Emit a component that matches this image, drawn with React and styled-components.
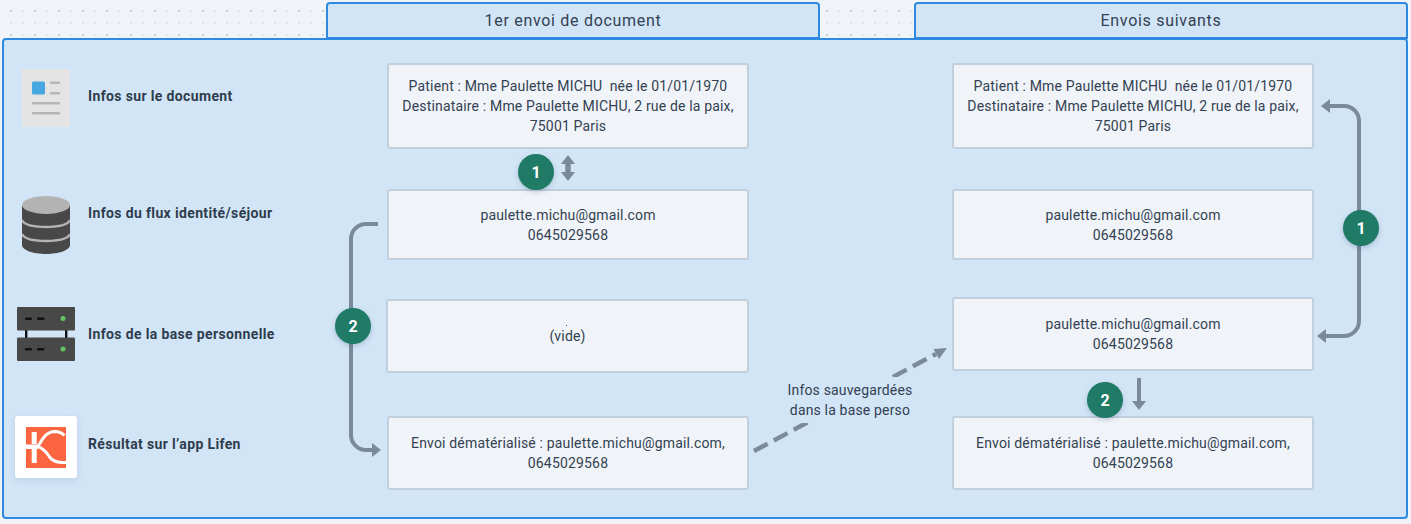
import React from "react"
import styled, { createGlobalStyle } from "styled-components"

const GlobalStyle = createGlobalStyle`
  html, body {
    margin: 0;
    padding: 0;
    background: #f0f4f8;
  }
  body {
    font-family: "Roboto", "Liberation Sans", sans-serif;
    color: #334152;
  }
`

const Page = styled.div`
  width: 1411px;
  height: 524px;
  box-sizing: border-box;
  padding: 2px 3px 0 2px;
  overflow: hidden;
  background-color: #f0f4f8;
  background-image:
    radial-gradient(circle, #c6cfda 1px, transparent 1.2px),
    radial-gradient(circle, #e1e6ec 1px, transparent 1.2px);
  background-size: 24px 24px, 12px 12px;
  background-position: -1px -1px, 5px 5px;
`

const TabRow = styled.div`
  display: flex;
  gap: 94px;
  padding-left: 324px;
  height: 37px;
`

const Tab = styled.div`
  width: 494px;
  box-sizing: border-box;
  display: flex;
  align-items: center;
  justify-content: center;
  background: #d2e5f7;
  border: 2px solid #2d8ae0;
  border-radius: 4px 4px 0 0;
  font-size: 16px;
  letter-spacing: 0.7px;
`

const Panel = styled.div`
  position: relative;
  display: flex;
  height: 481px;
  box-sizing: border-box;
  margin-top: -1px;
  background: #d2e5f7;
  border: 2px solid #2d8ae0;
  border-radius: 4px;
`

const LabelColumn = styled.div`
  width: 383px;
  flex: none;
  box-sizing: border-box;
  padding: 29px 0 0 11px;
  display: flex;
  flex-direction: column;
`

const LabelRow = styled.div`
  display: flex;
  align-items: center;
  height: ${p => p.$height}px;
  margin-top: ${p => p.$top}px;
`

const IconCell = styled.div`
  width: 62px;
  height: 100%;
  flex: none;
  display: flex;
  align-items: center;
  justify-content: center;
`

const LabelText = styled.span`
  margin-left: 11px;
  padding-bottom: ${p => p.$lift}px;
  font-size: 14px;
  font-weight: 700;
  letter-spacing: 0.36px;
  color: #2f3d4e;
`

const LogoTile = styled.div`
  width: 62px;
  height: 62px;
  display: flex;
  align-items: center;
  justify-content: center;
  background: #fff;
  border-radius: 3px;
  box-shadow: 0 2px 6px rgba(60, 90, 130, 0.15);
`

const BoxColumn = styled.div`
  width: 362px;
  flex: none;
  margin-left: ${p => p.$left}px;
  padding-top: 23px;
  display: flex;
  flex-direction: column;
`

const Box = styled.div`
  position: relative;
  height: ${p => p.$height}px;
  margin-top: ${p => p.$top}px;
  margin-left: ${p => p.$shift || 0}px;
  flex: none;
  box-sizing: border-box;
  display: flex;
  align-items: center;
  justify-content: center;
  padding: 0 8px;
  text-align: center;
  font-size: 14px;
  line-height: 20px;
  letter-spacing: 0.17px;
  white-space: pre-line;
  background: #f0f4f8;
  border: 2px solid #c2cfdc;
  border-radius: 3px;
`

const Speck = styled.i`
  position: absolute;
  left: 178px;
  top: 24px;
  width: 1px;
  height: 1px;
  background: #334152;
`

const Connectors = styled.svg`
  position: absolute;
  left: -4px;
  top: -40px;
  width: 1411px;
  height: 524px;
  pointer-events: none;
`

const Note = styled.div`
  position: absolute;
  left: 778px;
  top: 337px;
  width: 136px;
  padding: 3px 0;
  text-align: center;
  font-size: 14px;
  line-height: 20px;
  letter-spacing: 0.17px;
  background: #d2e5f7;
`

const Badge = styled.div`
  position: absolute;
  left: ${p => p.$x - 22}px;
  top: ${p => p.$y - 58}px;
  width: 36px;
  height: 36px;
  display: flex;
  align-items: center;
  justify-content: center;
  border-radius: 50%;
  background: #1f7a66;
  color: #fff;
  font-size: 16px;
  font-weight: 700;
  box-shadow: 0 2px 5px rgba(50, 80, 110, 0.25);
`

const DocIcon = () => (
  <svg width="48" height="58" viewBox="0 0 48 58">
    <rect width="48" height="58" rx="2" fill="#e4e4e4" />
    <rect x="10" y="12.5" width="13" height="13" rx="1.5" fill="#45a8e0" />
    <rect x="28" y="12.5" width="10" height="2.4" rx="1" fill="#b5b5b5" />
    <rect x="28" y="23" width="10" height="2.4" rx="1" fill="#b5b5b5" />
    <rect x="10" y="33" width="28" height="2.4" rx="1" fill="#b5b5b5" />
    <rect x="10" y="43" width="28" height="2.4" rx="1" fill="#b5b5b5" />
  </svg>
)

const DbIcon = () => (
  <svg width="48" height="58" viewBox="0 0 48 58">
    <path d="M0 9v40c0 5 11 9 24 9s24-4 24-9V9z" fill="#484848" />
    <ellipse cx="24" cy="9" rx="24" ry="9" fill="#b3b3b3" />
    <path d="M0 24c2 5 12 7 24 7s22-2 24-7" fill="none" stroke="#b3b3b3" strokeWidth="2.4" />
    <path d="M0 38c2 5 12 7 24 7s22-2 24-7" fill="none" stroke="#b3b3b3" strokeWidth="2.4" />
  </svg>
)

const ServerUnit = ({ y }) => (
  <g>
    <rect y={y} width="58" height="23.500" rx="1" fill="#484848" />
    <rect x="8" y={y + 10.500} width="7" height="2.400" rx="1" fill="#111" />
    <rect x="20" y={y + 10.500} width="7.500" height="2.400" rx="1" fill="#111" />
    <circle cx="46" cy={y + 11.500} r="2.500" fill="#62c462" />
  </g>
)

const ServerIcon = () => (
  <svg width="58" height="54" viewBox="0 0 58 54">
    <rect x="8" y="22" width="2.400" height="10" fill="#111" />
    <rect x="48" y="22" width="2.400" height="10" fill="#111" />
    <ServerUnit y={0} />
    <ServerUnit y={30.500} />
  </svg>
)

const LifenLogo = () => (
  <svg width="40" height="41" viewBox="0 0 40 41">
    <rect width="40" height="41" fill="#fb6640" />
    <path d="M5.700 5h5v12h-5zM5.700 22h5v14h-5zM0 17.500h12v4.500H0z" fill="#fff" />
    <g fill="none" stroke="#fff" strokeWidth="3">
      <path d="M11 19.500C15 18.500 16 5 29 4.500c4 0 7 1.500 9.500 4" />
      <path d="M11 19.500c7 1 10 7 13 11 3 4 8 5.500 16 5" />
    </g>
  </svg>
)

const rows = [
  { icon: <DocIcon />, text: "Infos sur le document", height: 58, top: 0, lift: 4 },
  { icon: <DbIcon />, text: "Infos du flux identité/séjour", height: 58, top: 69, lift: 24 },
  { icon: <ServerIcon />, text: "Infos de la base personnelle", height: 54, top: 53, lift: 0 },
  { icon: <LogoTile><LifenLogo /></LogoTile>, text: "Résultat sur l’app Lifen", height: 62, top: 55, lift: 6 },
]

const docInfo = "Patient : Mme Paulette MICHU\u00a0 née le 01/01/1970\nDestinataire : Mme Paulette MICHU, 2 rue de la paix,\n75001 Paris"
const contact = "paulette.michu@gmail.com\n0645029568"
const result = "Envoi dématérialisé : paulette.michu@gmail.com,\n0645029568"

const LINE = "#7b8a9a"

const App = () => (
  <Page>
    <GlobalStyle />
    <TabRow>
      <Tab>1er envoi de document</Tab>
      <Tab>Envois suivants</Tab>
    </TabRow>
    <Panel>
      <LabelColumn>
        {rows.map(r => (
          <LabelRow key={r.text} $height={r.height} $top={r.top}>
            <IconCell>{r.icon}</IconCell>
            <LabelText $lift={r.lift}>{r.text}</LabelText>
          </LabelRow>
        ))}
      </LabelColumn>
      <BoxColumn $left={0}>
        <Box $height={86} $top={0}>{docInfo}</Box>
        <Box $height={71} $top={40}>{contact}</Box>
        <Box $height={74} $top={39} $shift={-1}>
          <Speck />
          (vide)
        </Box>
        <Box $height={74} $top={43}>{result}</Box>
      </BoxColumn>
      <BoxColumn $left={203}>
        <Box $height={86} $top={0}>{docInfo}</Box>
        <Box $height={71} $top={40}>{contact}</Box>
        <Box $height={74} $top={37}>{contact}</Box>
        <Box $height={74} $top={45}>{result}</Box>
      </BoxColumn>

      <Connectors viewBox="0 0 1411 524">
        <g fill="none" stroke={LINE} strokeWidth="4">
          <path d="M378 224H366a15 15 0 0 0-15 15V435a15 15 0 0 0 15 15h7" />
          <path d="M1329 106h15a15 15 0 0 1 15 15V321a15 15 0 0 1-15 15h-18" />
          <path d="M1139 378v24" />
          <path d="M568 161v14" strokeWidth="5.500" />
          <path d="M754 451L936 354" strokeWidth="4.500" strokeDasharray="15.500 7" />
        </g>
        <g fill={LINE}>
          <path d="M381 450l-9-7v14z" />
          <path d="M1321 106l9-7v14z" />
          <path d="M1317 336l9-7v14z" />
          <path d="M1139 410l-7-9h14z" />
          <path d="M568 155l-7 9h14z" />
          <path d="M568 181l-7-9h14z" />
          <path d="M947 348l-13.500 1 5.500 10z" />
        </g>
      </Connectors>

      <Note>
        Infos sauvegardées
        <br />
        dans la base perso
      </Note>

      <Badge $x={536} $y={172}>1</Badge>
      <Badge $x={353} $y={326}>2</Badge>
      <Badge $x={1361} $y={228}>1</Badge>
      <Badge $x={1105} $y={400}>2</Badge>
    </Panel>
  </Page>
)

export default App
